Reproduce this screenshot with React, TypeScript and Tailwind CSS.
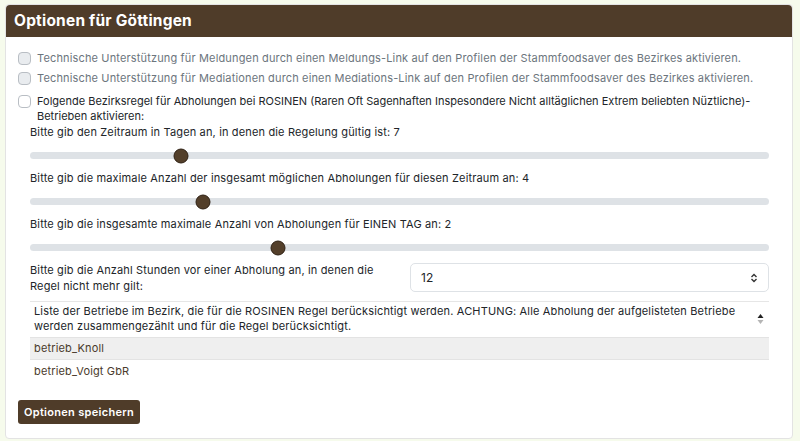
import React from "react";

const sliders = [
  { label: "Bitte gib den Zeitraum in Tagen an, in denen die Regelung gültig ist: 7", pos: 20.4 },
  { label: "Bitte gib die maximale Anzahl der insgesamt möglichen Abholungen für diesen Zeitraum an: 4", pos: 23.4 },
  { label: "Bitte gib die insgesamte maximale Anzahl von Abholungen für EINEN TAG an: 2", pos: 33.5 },
];

const betriebe = ["betrieb_Knoll", "betrieb_Voigt GbR"];

function Checkbox({ disabled }: { disabled?: boolean }) {
  return (
    <span
      className={
        "mt-[1px] h-[13px] w-[13px] shrink-0 rounded-[4px] border " +
        (disabled ? "border-[#b9bec4] bg-[#e9ecef]" : "border-[#b9bec4] bg-white")
      }
    />
  );
}

function Slider({ pos }: { pos: number }) {
  return (
    <div className="flex h-[31px] items-center">
      <div className="relative h-[7px] w-full rounded-full bg-[#dee2e6]">
        <span
          className="absolute top-1/2 h-[15px] w-[15px] -translate-x-1/2 -translate-y-1/2 rounded-full border border-[#2e2013] bg-[#533f2a]"
          style={{ left: `${pos}%` }}
        />
      </div>
    </div>
  );
}

export default function App() {
  return (
    <div
      className="min-h-[441px] w-[800px] bg-[#f6fbec] pt-[4px] pl-[5px] pr-[7px] text-[11px] tracking-[0.15px] text-[#212529]"
      style={{ fontFamily: "Inter, 'Noto Sans', sans-serif" }}
    >
      <div className="rounded-[4px] border border-[#e3e3e3] bg-white">
        <div className="flex h-[32px] items-center rounded-t-[4px] bg-[#4f3c29] px-[8px] text-[15.5px] font-bold tracking-[0.2px] text-white">
          Optionen für Göttingen
        </div>
        <div className="pb-[14px] pl-[12px] pr-[23px] pt-[14px]">
          <div className="mb-[5px] flex gap-[6px] leading-[15px] text-[#6c757d]">
            <Checkbox disabled />
            <span>
              Technische Unterstützung für Meldungen durch einen Meldungs-Link auf den Profilen der Stammfoodsaver des Bezirkes aktivieren.
            </span>
          </div>
          <div className="mb-[8px] flex gap-[6px] leading-[15px] text-[#6c757d]">
            <Checkbox disabled />
            <span>
              Technische Unterstützung für Mediationen durch einen Mediations-Link auf den Profilen der Stammfoodsaver des Bezirkes aktivieren.
            </span>
          </div>
          <div className="mb-[1px] flex gap-[6px] leading-[15px] tracking-[0px]">
            <Checkbox />
            <span>
              Folgende Bezirksregel für Abholungen bei ROSINEN (Raren Oft Sagenhaften Inspesondere Nicht alltäglichen Extrem beliebten Nüztliche)-Betrieben aktivieren:
            </span>
          </div>

          <div className="pl-[12px]">
            {sliders.map((s) => (
              <div key={s.label}>
                <div className="leading-[15px]">{s.label}</div>
                <Slider pos={s.pos} />
              </div>
            ))}

            <div className="flex items-start justify-between">
              <div className="w-[350px] leading-[15.5px]">
                Bitte gib die Anzahl Stunden vor einer Abholung an, in denen die Regel nicht mehr gilt:
              </div>
              <div className="flex h-[29px] w-[359px] items-center justify-between rounded-[5px] border border-[#dee2e6] px-[10px] text-[12px]">
                <span>12</span>
                <svg width="8" height="10" viewBox="0 0 8 10">
                  <path d="M1.5 4 L4 1.5 L6.5 4" fill="none" stroke="#333" strokeWidth="1.4" />
                  <path d="M1.5 6 L4 8.5 L6.5 6" fill="none" stroke="#333" strokeWidth="1.4" />
                </svg>
              </div>
            </div>

            <div className="mt-[7px] border-t border-[#e6e6e6]">
              <div className="flex items-center justify-between border-b border-[#e3e3e3] px-[4px] pb-[3px] pt-[2px] leading-[15px]">
                <span className="w-[720px]">
                  Liste der Betriebe im Bezirk, die für die ROSINEN Regel berücksichtigt werden. ACHTUNG: Alle Abholung der aufgelisteten Betriebe werden zusammengezählt und für die Regel berücksichtigt.
                </span>
                <svg width="7" height="12" viewBox="0 0 7 12" className="mr-[1px]">
                  <path d="M0.5 5 L3.5 1 L6.5 5 Z" fill="#222" />
                  <path d="M0.5 7 L3.5 11 L6.5 7 Z" fill="#b5b5b5" />
                </svg>
              </div>
              {betriebe.map((b, i) => (
                <div
                  key={b}
                  className={
                    "flex h-[22px] items-center px-[4px] text-[#4a3b2c] " +
                    (i === 0 ? "border-b border-[#e3e3e3] bg-[#efefef]" : "")
                  }
                >
                  {b}
                </div>
              ))}
            </div>
          </div>

          <button className="mt-[18px] h-[24px] rounded-[3px] bg-[#4f3c29] px-[6px] text-[11px] font-semibold tracking-[0.3px] text-white">
            Optionen speichern
          </button>
        </div>
      </div>
    </div>
  );
}
